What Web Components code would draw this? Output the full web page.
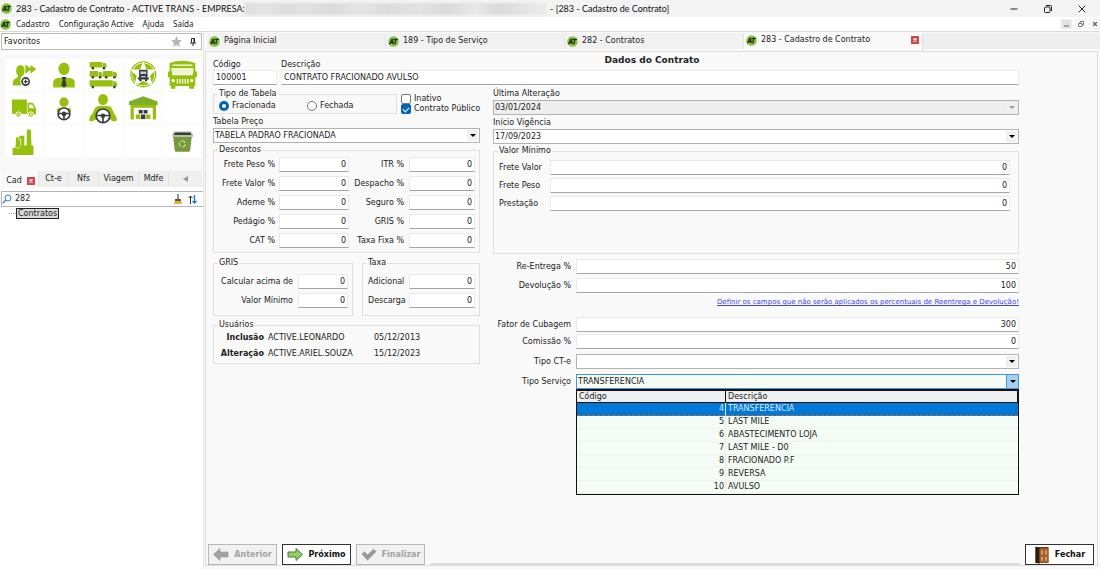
<!DOCTYPE html>
<html lang="pt-BR">
<head>
<meta charset="utf-8">
<title>283 - Cadastro de Contrato</title>
<style>
html,body{margin:0;height:100%}
body{font:8px/10px "DejaVu Sans",Verdana,sans-serif;color:#222;background:#fff}
</style>
</head>
<body>
<contract-app></contract-app>
<script>
const BASE = `*{box-sizing:border-box}:host{display:block}
button,input,select{font:inherit;color:inherit;margin:0;padding:0;border:0;background:none;border-radius:0;outline:0}
svg{display:block;flex:none}`;
function define(name, render, css = '') {
  customElements.define(name, class extends HTMLElement {
    connectedCallback() {
      if (this.shadowRoot) return;
      const root = this.attachShadow({ mode: 'open' });
      root.innerHTML = `<style>${BASE}${css}</style>${render(this)}`;
    }
  });
}
const at = (el, n, d = '') => el.getAttribute(n) ?? d;

define('app-logo', () => `<svg width="11" height="11" viewBox="0 0 22 22" aria-hidden="true"><circle cx="11" cy="11" r="10.5" fill="#86c540"/>
<text x="10.500" y="15.500" text-anchor="middle" font-family="Liberation Sans" font-size="13" font-weight="bold" font-style="italic" fill="#14200c" stroke="#14200c" stroke-width=".6">AT</text></svg>`, `:host{flex:none}`);

define('close-mark', () => `<button aria-label="Fechar aba"><svg width="8" height="8" viewBox="0 0 8 8"><rect width="8" height="8" fill="#cd4a4a"/><path d="M2.500 2.500l3 3m0-3l-3 3" stroke="#fff" stroke-width="1.300"/></svg></button>`, `:host{flex:none}button{display:block}`);

define('window-title', () => `
<app-logo></app-logo><div class="t"><span>283 - Cadastro de Contrato - ACTIVE TRANS - EMPRESA:</span><span class="mask"></span></div><span>- [283 - Cadastro de Contrato]</span>
<div class="ctl">
<button aria-label="Minimizar"><svg width="8" height="8" viewBox="0 0 8 8"><path d="M0.500 4h7" stroke="#222"/></svg></button>
<button aria-label="Restaurar"><svg width="8" height="8" viewBox="0 0 8 8" fill="none" stroke="#222"><rect x="0.500" y="2" width="5.500" height="5.500" rx="1"/><path d="M2 .5h4.500q1 0 1 1V6"/></svg></button>
<button aria-label="Fechar"><svg width="8" height="8" viewBox="0 0 8 8"><path d="M.7.7l6.600 6.600m0-6.600L.7 7.300" stroke="#222"/></svg></button></div>`,
`:host{display:flex;align-items:center;height:17px;background:#f3f3f3;padding:0 14px 0 1px;font:9px/14px Lato,"Noto Sans",sans-serif;color:#111;white-space:nowrap}
.t{display:flex;align-items:center;flex:0 1 531px;margin:0 3px 0 4px}
.mask{flex:1;height:12px;filter:blur(1px);background:linear-gradient(90deg,#ddd,#e4e4e4 6%,#dcdcdc 14%,#e2e2e2 20%,#dadada 28%,#e5e5e5 38%,#dcdcdc 47%,#e2e2e2 58%,#dadada 67%,#e8e8e8 76%,#d9d9d9 84%,#e3e3e3 92%,#ececec)}
.ctl{margin-left:auto;display:flex;gap:26px}.ctl button{display:block}`);

define('menu-bar', () => `<app-logo></app-logo><nav><a href="#">Cadastro</a><a href="#">Configuração Active</a><a href="#">Ajuda</a><a href="#">Saída</a></nav>
<div class="ctl"><button class="on" aria-label="Minimizar janela"><svg width="5" height="6" viewBox="0 0 5 6"><path d="M0 5h5" stroke="#5b6b80"/></svg></button>
<button aria-label="Restaurar janela"><svg width="6" height="6" viewBox="0 0 6 6" fill="none" stroke="#5b6b80" stroke-width=".9"><path d="M2 2V.5h3.500V4H4M.5 2.500H4v3H.5z"/></svg></button>
<button aria-label="Fechar janela"><svg width="6" height="6" viewBox="0 0 6 6"><path d="M1 1l4 4m0-4L1 5" stroke="#5b6b80" stroke-width="1.500"/></svg></button></div>`,
`:host{display:flex;align-items:center;height:15px;background:#fff;border-bottom:1px solid #dadada;font:8px/12px "Noto Sans",sans-serif;color:#222}
nav{display:flex;gap:9px;margin-left:5px}a{color:inherit;text-decoration:none;white-space:nowrap}
.ctl{margin-left:auto;display:flex;gap:3px}.ctl button{width:11px;height:10px;display:grid;place-items:center;border:1px solid #eee}.ctl .on{background:#e2e2e2}`);

const G = '#97bf0d', D = '#3a3c40';
const truck = (x, y, w, h) => `<rect x="${x}" y="${y}" width="${w - 13}" height="${h - 5}" rx="2"/><path d="M${x + w - 12} ${y + 3}h8l4 6v${h - 14}h-12z"/><g fill="${D}"><circle cx="${x + 10}" cy="${y + h - 3}" r="4"/><circle cx="${x + w - 8}" cy="${y + h - 3}" r="4"/></g>`;
const wheel = (x, y, r) => `<g fill="#fff" stroke="${D}"><circle cx="${x}" cy="${y}" r="${r}" stroke-width="5"/><path fill="none" stroke-width="5" d="M${x - r} ${y - 1}H${x + r}M${x} ${y}V${y + r}"/></g><circle cx="${x}" cy="${y}" r="7" fill="${D}"/>`;
const ICONS = [
 ['Clientes', `<ellipse cx="47" cy="36" rx="13" ry="18"/><path d="M24 81q-2-20 12-23l5-8h12q-10 12-4 31z"/><path d="M62 17l16 11V18l18 13-18 14V34L62 45z"/><circle cx="63" cy="69" r="11" fill="#fff" stroke="${D}" stroke-width="5"/><path d="M57 69h12M63 63v12" stroke="${D}" stroke-width="4"/>`],
 ['Vendedores', `<ellipse cx="58" cy="30" rx="17" ry="19"/><path d="M25 87V70q2-10 14-12h38q12 2 14 12v17z"/><path d="M50 55h16l-4 8 4 18-8 7-8-7 4-18z" fill="${D}"/>`],
 ['Frota', truck(17, 9, 52, 22) + truck(17, 37, 40, 22) + truck(58, 37, 43, 22) + truck(17, 65, 84, 24)],
 ['Rastreamento', `<circle cx="59" cy="47" r="38" fill="#fff" stroke="${G}" stroke-width="4"/><circle cx="59" cy="47" r="34"/><path fill="#fff" d="M59 8l10 24 30 0-20 20 8 30-28-15-28 15 8-30-20-20h30z"/><path fill="${D}" d="M46 33h26v24h4v6h-5v5h-7v-5H54v5h-7v-5h-5v-6h4z"/><path fill="#ccc" d="M50 38h18v8H50zM52 52h14v4H52z"/>`],
 ['Veículos', `<path d="M20 12q38-14 79 0v26h5v18h-5v26h-4v9H80v-8H38v8H24v-9h-4V56h-5V38h5z"/><path fill="#fff" d="M29 17h61v4H29zM25 28h69l-4 22H29z"/><path d="M29 30h61l-3 16H32z" fill="#eef6cf"/><circle cx="31" cy="66" r="5" fill="#fff"/><circle cx="88" cy="66" r="5" fill="#fff"/><path d="M44 61v14m8-14v14m8-14v14m8-14v14m8-14v14" stroke="#fff" stroke-width="4"/>`],
 ['Entregas', `<path d="M21 23h46v44H21z"/><path d="M69 33h16l10 18v18H69z"/><path fill="#fff" d="M74 38h9l6 12H74z"/><g stroke="#fff" stroke-width="3"><circle cx="41" cy="69" r="8"/><circle cx="79" cy="69" r="8"/></g><circle cx="41" cy="69" r="3" fill="#fff"/><circle cx="79" cy="69" r="3" fill="#fff"/>`],
 ['Motoristas', `<ellipse cx="58" cy="31" rx="14" ry="15"/><rect x="36" y="48" width="44" height="18" rx="9"/>` + wheel(58, 67, 18)],
 ['Condutores', `<ellipse cx="58" cy="23" rx="15" ry="17"/><path d="M16 88q-1-12 10-22l8-18q4-5 12-5h26q8 0 12 5l8 18q10 10 8 22-10 5-18-3H33q-10 8-17 3z"/>` + wheel(58, 73, 21)],
 ['Armazém', `<path fill="#7fae2b" d="M15 40V29l44-16 44 16v11z"/><path d="M20 40h78v44H88V48H30v36H20z"/><path fill="${D}" d="M45 55h12v11H45zM60 55h12v11H60z"/><path d="M36 69h14v14H36zM67 69h14v14H67z"/><path fill="${D}" d="M52 69h13v14H52z"/>`],
 null,
 ['Empresas', `<path d="M23 92V70h9l2-32h10v-5h15v30h7l1-49h12l2 49h6v29z"/><path stroke="#fff" stroke-width="2" fill="none" d="M40 46l8-4v22M33 70h12"/>`],
 null, null, null,
 ['Lixeira', `<path fill="#77983b" d="M31 35h57l-5 43q-1 4-5 4H41q-4 0-5-4z"/><path fill="#b9bdb5" d="M28 30l5-10h53l6 10v7H28z"/><path fill="#344427" d="M33 31l4-8h46l4 8z"/><circle cx="59" cy="58" r="9" fill="none" stroke="#bdd38c" stroke-width="4" stroke-dasharray="14 5"/>`],
];

define('favorites-grid', () => ICONS.map(i => i ? `<button aria-label="${i[0]}"><svg width="100%" height="32" viewBox="0 0 118 98" fill="${G}">${i[1]}</svg></button>` : '<span></span>').join(''),
`:host{display:grid;grid-template-columns:repeat(5,1fr);grid-auto-rows:32px;gap:1px;padding:5px 1px 14px 5px;background:#f8f8f8}
button,span{background:#fff;min-width:0}`);

define('side-panel', () => `
<header><span>Favoritos</span><svg width="11" height="11" viewBox="0 0 24 24"><path fill="#b5b5b5" d="M12 0l3.500 8.500L24 9l-6.500 6L19.500 24 12 19l-7.500 5L6.500 15 0 9l8.500-.5z"/></svg>
<svg width="6" height="8" viewBox="0 0 6 8"><path d="M1.500.5h3V4.500M1.500.5V4.500M0 5h6M3 5v3" stroke="#222" fill="none"/><path d="M4 1v4" stroke="#222"/></svg></header>
<favorites-grid></favorites-grid>
<nav><a href="#" class="on">Cad<close-mark></close-mark></a><a href="#">Ct-e</a><a href="#">Nfs</a><a href="#" class="wide">Viagem</a><a href="#">Mdfe</a><button aria-label="Anterior"><svg width="5" height="6" viewBox="0 0 5 6"><path d="M5 0v6L0 3z" fill="#999"/></svg></button></nav>
<div class="search"><svg width="10" height="10" viewBox="0 0 10 10" fill="none" stroke="#3b82c4"><circle cx="6" cy="4" r="3"/><path d="M4 6L.7 9.300" stroke-width="1.300"/></svg><input aria-label="Pesquisar" value="282">
<button aria-label="Limpar"><svg width="8" height="10" viewBox="0 0 8 10"><path d="M4 0v5" stroke="#444" stroke-width="1.200"/><path d="M1 5h6v2H1z" fill="#555"/><path d="M1 7h6l1 3H0z" fill="#f5a623"/></svg></button>
<button aria-label="Ordenar"><svg width="9" height="9" viewBox="0 0 9 9" fill="none"><path d="M2.500 9V1M.5 3l2-2 2 2" stroke="#333"/><path d="M6.500 0v8M4.500 6l2 2 2-2" stroke="#1477cc" stroke-width="1.300"/></svg></button></div>
<div class="tree"><i></i><button>Contratos</button></div>`,
`:host{background:#fff;border-right:1px solid #e3e3e3}
header{display:flex;align-items:center;gap:8px;height:17px;margin:1px 1px 4px;padding:0 5px 0 2px;border:1px solid #bbb}
header span{flex:1}
nav{display:flex;height:17px;background:#efefef;margin:0 1px;border-bottom:1px solid #fafafa}
nav a{display:flex;align-items:center;justify-content:center;gap:5px;width:30px;border-right:1px solid #e2e2e2;color:inherit;text-decoration:none;white-space:nowrap}
nav a.on{background:#f9f9f9;width:38px;padding:3px 2px 0 4px}
nav a.wide{width:40px}
nav button{flex:1;display:grid;place-items:center}
.search{display:flex;align-items:center;gap:6px;height:16px;margin:3px 0 0 1px;padding:0 6px 0 0;border:1px solid #b5b5b5;border-width:1px 0 1px 1px}
.search input{flex:1;min-width:0;margin-left:-3px}
.search button{display:block}
.tree{display:flex;align-items:center;padding:1px 0 0 9px}
.tree i{width:7px;border-top:1px dotted #999}
.tree button{border:1px solid #222;background:#d9d9d9;height:11px;line-height:9px;padding:0 1px}`);

define('doc-tab', () => `<a href="#"><app-logo></app-logo><span><slot></slot></span></a><slot name="end"></slot>`,
`:host{display:flex;align-items:center;flex:0 1 179px;height:16px;padding:0 6px 0 2px;background:#f1f1f1;border-right:1px solid #e4e4e4}
:host([active]){background:#f9f9f9;height:20px;padding:0 3px 6px 2px;border-right-color:#dedede}
a{flex:1;display:flex;align-items:center;gap:4px;color:inherit;text-decoration:none;white-space:nowrap}`);

define('tab-strip', () => `<doc-tab>Página Inicial</doc-tab><doc-tab>189 - Tipo de Serviço</doc-tab><doc-tab>282 - Contratos</doc-tab><doc-tab active>283 - Cadastro de Contrato<close-mark slot="end"></close-mark></doc-tab><i></i>`,
`:host{display:flex;height:19px;padding:1px 0 0 3px;background:#f9f9f9}i{flex:1;height:16px;background:#eee}`);

/* Text field; the label sits above it, or to its left with the "inline" attribute. */
define('text-field', el => `${el.hasAttribute('label') ? `<label for="i">${at(el, 'label')}</label>` : ''}<input id="i" value="${at(el, 'value')}">`,
`:host{display:grid;grid-template-rows:10px 15px}
:host([inline]){grid-template-rows:15px;grid-template-columns:var(--label,80px) 1fr;align-items:center;column-gap:var(--gap,4px)}
:host([inline]) label{text-align:var(--align,right)}
label{white-space:nowrap}
input{width:100%;min-width:0;height:15px;background:#fff;border:1px solid #eaeaea;border-bottom-color:#a5a5a5;padding:0 2px}
:host([inline]) input{text-align:right}`);

define('combo-field', el => `<label for="s">${at(el, 'label')}</label><div><select id="s"${el.hasAttribute('disabled') ? ' disabled' : ''}><option>${at(el, 'value')}</option></select><span><svg width="6" height="3" viewBox="0 0 6 3"><path d="M0 0h6L3 3z"/></svg></span></div><slot></slot>`,
`:host{display:grid;grid-template-rows:10px 15px;row-gap:1px}
:host([inline]){grid-template-rows:15px;grid-template-columns:var(--label,80px) 1fr;align-items:center;column-gap:var(--gap,4px);position:relative}
:host([inline]) label{text-align:right}
label{white-space:nowrap}
div{display:grid;height:15px;border:1px solid #b2b2b2;background:#fff}
select{grid-area:1/1;appearance:none;width:100%;min-width:0;height:13px;padding:0 14px 0 1px;opacity:1}
span{grid-area:1/1;justify-self:end;width:11px;margin:1px;display:grid;place-items:center;background:#f0f0f0;pointer-events:none}
:host([disabled]) div{background:#eee}:host([disabled]) path{fill:#999}
:host([open]) div{border-color:#3f97dc;background:#f5fcf5}:host([open]) span{background:#a9cff0;border-left:1px solid #3f97dc;width:12px;margin:0}`);

define('group-box', el => `<fieldset><legend>${at(el, 'label')}</legend><div><slot></slot></div></fieldset>`,
`fieldset{margin:0;min-width:0;height:100%;border:1px solid #e0e0e0;padding:0}
div{padding:var(--pad,0)}
legend{padding:0 1px;margin-left:4px;line-height:10px}`);

define('table-type', () => `<group-box label="Tipo de Tabela"><div>
<label><input type="radio" name="t" checked>Fracionada</label><label><input type="radio" name="t">Fechada</label></div></group-box>
<section><label><input type="checkbox">Inativo</label><label><input type="checkbox" checked>Contrato Público</label></section>`,
`:host{display:grid;grid-template-columns:184px 1fr;column-gap:4px;--pad:0 5px}
group-box{height:25px}
div{display:grid;grid-template-columns:88px 1fr;padding-top:2px}
label{display:flex;align-items:center;gap:3px;white-space:nowrap}
section{display:flex;flex-direction:column;padding-top:5px}
input{appearance:none;flex:none;width:10px;height:10px;border:1px solid #777;background:#fff}
[type=radio]{border-radius:50%}[type=radio]:checked{border:3px solid #0063b8}
[type=checkbox]{border-radius:2px;display:grid;place-items:center}
[type=checkbox]:checked{border-color:#0063b8;background:#0063b8}
[type=checkbox]:checked::after{content:"";width:3px;height:5px;border:solid #fff;border-width:0 1px 1px 0;margin-bottom:1px;rotate:45deg}`);

define('user-log', () => `<table><tr><th scope="row">Inclusão</th><td>ACTIVE.LEONARDO</td><td>05/12/2013</td></tr><tr><th scope="row">Alteração</th><td>ACTIVE.ARIEL.SOUZA</td><td>15/12/2023</td></tr></table>`,
`table{border-collapse:collapse;color:#222;font-size:inherit}th,td{padding:0;height:16px;text-align:left;white-space:nowrap}th{width:50px;text-align:right}td{padding-left:4px}td:nth-child(2){width:106px}`);

const SERVICES = [[4, 'TRANSFERENCIA'], [5, 'LAST MILE'], [6, 'ABASTECIMENTO LOJA'], [7, 'LAST MILE - D0'], [8, 'FRACIONADO P.F'], [9, 'REVERSA'], [10, 'AVULSO']];
define('service-list', () => `<table><thead><tr><th>Código</th><th>Descrição</th></tr></thead><tbody>${SERVICES.map((r, i) => `<tr${i ? '' : ' class="on"'}><td>${r[0]}</td><td>${r[1]}</td></tr>`).join('')}</tbody></table>`,
`:host{position:absolute;z-index:2;top:100%;right:0;left:calc(var(--label) + var(--gap))}
table{width:100%;table-layout:fixed;border-collapse:separate;border-spacing:0;background:#f5fcf5;border:1px solid #111;font-size:inherit}
th{height:13px;padding:0 2px;background:#efefef;border-bottom:1px solid #111;border-top:1px solid #111;text-align:left;font-weight:normal}
th:first-child{width:149px;border-right:1px solid #111}
th:last-child{border-right:1px solid #111}
td{height:13px;padding:0 2px;border-bottom:1px solid #edf2ed}
td:first-child{text-align:right;padding-right:1px;border-right:1px solid #e7efe7}
.on td{background:#0078d7;color:#d8ecff;border-bottom:1px dashed #b06a30}`);

define('contract-form', () => `
<div class="head"><h1>Dados do Contrato</h1><div class="ids"><text-field label="Código" value="100001"></text-field><text-field label="Descrição" value="CONTRATO FRACIONADO AVULSO"></text-field></div></div>
<div class="cols">
<div class="left">
<table-type></table-type>
<combo-field label="Tabela Preço" value="TABELA PADRAO FRACIONADA"></combo-field>
<group-box class="disc" label="Descontos"><div class="two">
<div class="stack a">${['Frete Peso', 'Frete Valor', 'Ademe', 'Pedágio', 'CAT'].map(l => `<text-field inline label="${l} %" value="0"></text-field>`).join('')}</div>
<div class="stack b">${['ITR', 'Despacho', 'Seguro', 'GRIS', 'Taxa Fixa'].map(l => `<text-field inline label="${l} %" value="0"></text-field>`).join('')}</div></div></group-box>
<div class="pair">
<group-box label="GRIS"><div class="stack c"><text-field inline label="Calcular acima de" value="0"></text-field><text-field inline label="Valor Mínimo" value="0"></text-field></div></group-box>
<group-box label="Taxa"><div class="stack d"><text-field inline label="Adicional" value="0"></text-field><text-field inline label="Descarga" value="0"></text-field></div></group-box></div>
<group-box class="users" label="Usuários"><user-log></user-log></group-box>
</div>
<div class="right">
<combo-field class="first" disabled label="Última Alteração" value="03/01/2024"></combo-field>
<combo-field label="Início Vigência" value="17/09/2023"></combo-field>
<group-box class="min" label="Valor Mínimo"><div class="stack"><text-field inline label="Frete Valor" value="0"></text-field><text-field inline label="Frete Peso" value="0"></text-field><text-field inline label="Prestação" value="0"></text-field></div></group-box>
<div class="rates"><text-field inline label="Re-Entrega %" value="50"></text-field><text-field inline label="Devolução %" value="100"></text-field></div>
<a href="#">Definir os campos que não serão aplicados os percentuais de Reentrega e Devolução!</a>
<div class="rest"><text-field inline label="Fator de Cubagem" value="300"></text-field><text-field inline label="Comissão %" value="0"></text-field>
<combo-field class="gap" inline label="Tipo CT-e" value=""></combo-field><combo-field class="gap" inline open label="Tipo Serviço" value="TRANSFERENCIA"><service-list></service-list></combo-field></div>
</div></div>`,
`:host{padding:2px 0 0 7px}
.head{display:grid}
h1{grid-area:1/1;margin:0;padding-right:6px;text-align:center;font-size:9px;line-height:12px}
.ids{grid-area:1/1;display:grid;grid-template-columns:64px 1fr;column-gap:4px;padding:6px 78px 0 0}
.cols{display:grid;grid-template-columns:267px 1fr;column-gap:13px;padding-right:78px;margin-top:4px}
.left,.right{display:flex;flex-direction:column;min-width:0}
.left combo-field{margin-top:3px}
.right combo-field{margin-top:3px}.right .first{margin-top:0}
.disc,.min{margin-top:2px;height:108px}
.stack{display:grid;row-gap:4px}
.disc{--pad:2px 4px 0 5px}
.two{display:grid;grid-template-columns:130px 1fr}
.a{--label:56px}.b{--label:55px;--gap:5px}
.pair{display:grid;grid-template-columns:140px 118px;column-gap:9px;margin-top:5px}
.pair group-box{height:58px;--pad:6px 4px 0 5px}
.c{--label:74px;--gap:5px}.d{--label:41px;--gap:0px;--align:left}
.users{margin-top:4px;height:44px;--pad:0}
.min{--pad:4px 8px 0 5px}
.min .stack{row-gap:3px;--label:51px;--gap:0px;--align:left}
.right{--label:78px;--gap:5px}
.rates{display:grid;row-gap:4px;margin-top:5px}
a{align-self:flex-end;margin-top:4px;font-size:7px;line-height:10px;color:#4545e8;white-space:nowrap}
.rest{display:grid;row-gap:2px;margin-top:10px}
.rest .gap{margin-top:3px}`);

define('action-button', el => `<button${el.hasAttribute('disabled') ? ' disabled' : ''}><slot name="icon"></slot><slot></slot></button>`,
`button{display:flex;align-items:center;gap:5px;height:21px;width:69px;padding:0 4px;justify-content:center;border:1px solid #333;background:#fff;font-weight:bold;color:#111;white-space:nowrap}
button:disabled{border-color:#b8b8b8;background:#f1f1f1;color:#a3a3a3}`);

define('action-bar', () => `
<action-button disabled><svg slot="icon" width="16" height="13" viewBox="0 0 32 26"><path d="M1 13L14 1v7h16v10H14v7z" fill="#a2a2a2" stroke="#8d8d8d"/></svg>Anterior</action-button>
<action-button><svg slot="icon" width="16" height="13" viewBox="0 0 32 26"><path d="M31 13L18 1v7H2v10h16v7z" fill="#8fd16a" stroke="#4a7a34" stroke-width="2"/></svg>Próximo</action-button>
<action-button disabled><svg slot="icon" width="16" height="13" viewBox="0 0 32 26"><path d="M1 12l6-5 6 6L25 2l6 5-18 18z" fill="#999"/></svg>Finalizar</action-button><i></i>
<action-button><svg slot="icon" width="16" height="18" viewBox="0 0 32 36"><path d="M3 2h26v32H3z" fill="#6b3a1c"/><path d="M3 1l9 3v31L3 34z" fill="#2e1c12"/><path d="M11 5h18v28H11z" fill="#b56a35"/><path d="M13 8h6v10h-6zm8 0h6v10h-6zM13 21h6v9h-6zm8 0h6v9h-6z" fill="#dc9a61" stroke="#7a431f"/></svg>Fechar</action-button>`,
`:host{display:flex;gap:5px;padding:0 3px 0 2px}i{flex:1;border-bottom:2px solid #ddd}svg{flex:none}`);

define('contract-app', () => `<window-title></window-title><menu-bar></menu-bar><main><side-panel></side-panel><section><tab-strip></tab-strip><div class="pane"><contract-form></contract-form><action-bar></action-bar></div></section></main>`,
`:host{display:flex;flex-direction:column;min-height:100vh;background:#f9f9f9}
main{flex:1;display:grid;grid-template-columns:204px 1fr}
section{display:flex;flex-direction:column;min-width:0}
.pane{flex:1;display:flex;flex-direction:column;justify-content:space-between;margin:0 2px 3px 1px;border:1px solid #dedede}`);
</script>
</body>
</html>
